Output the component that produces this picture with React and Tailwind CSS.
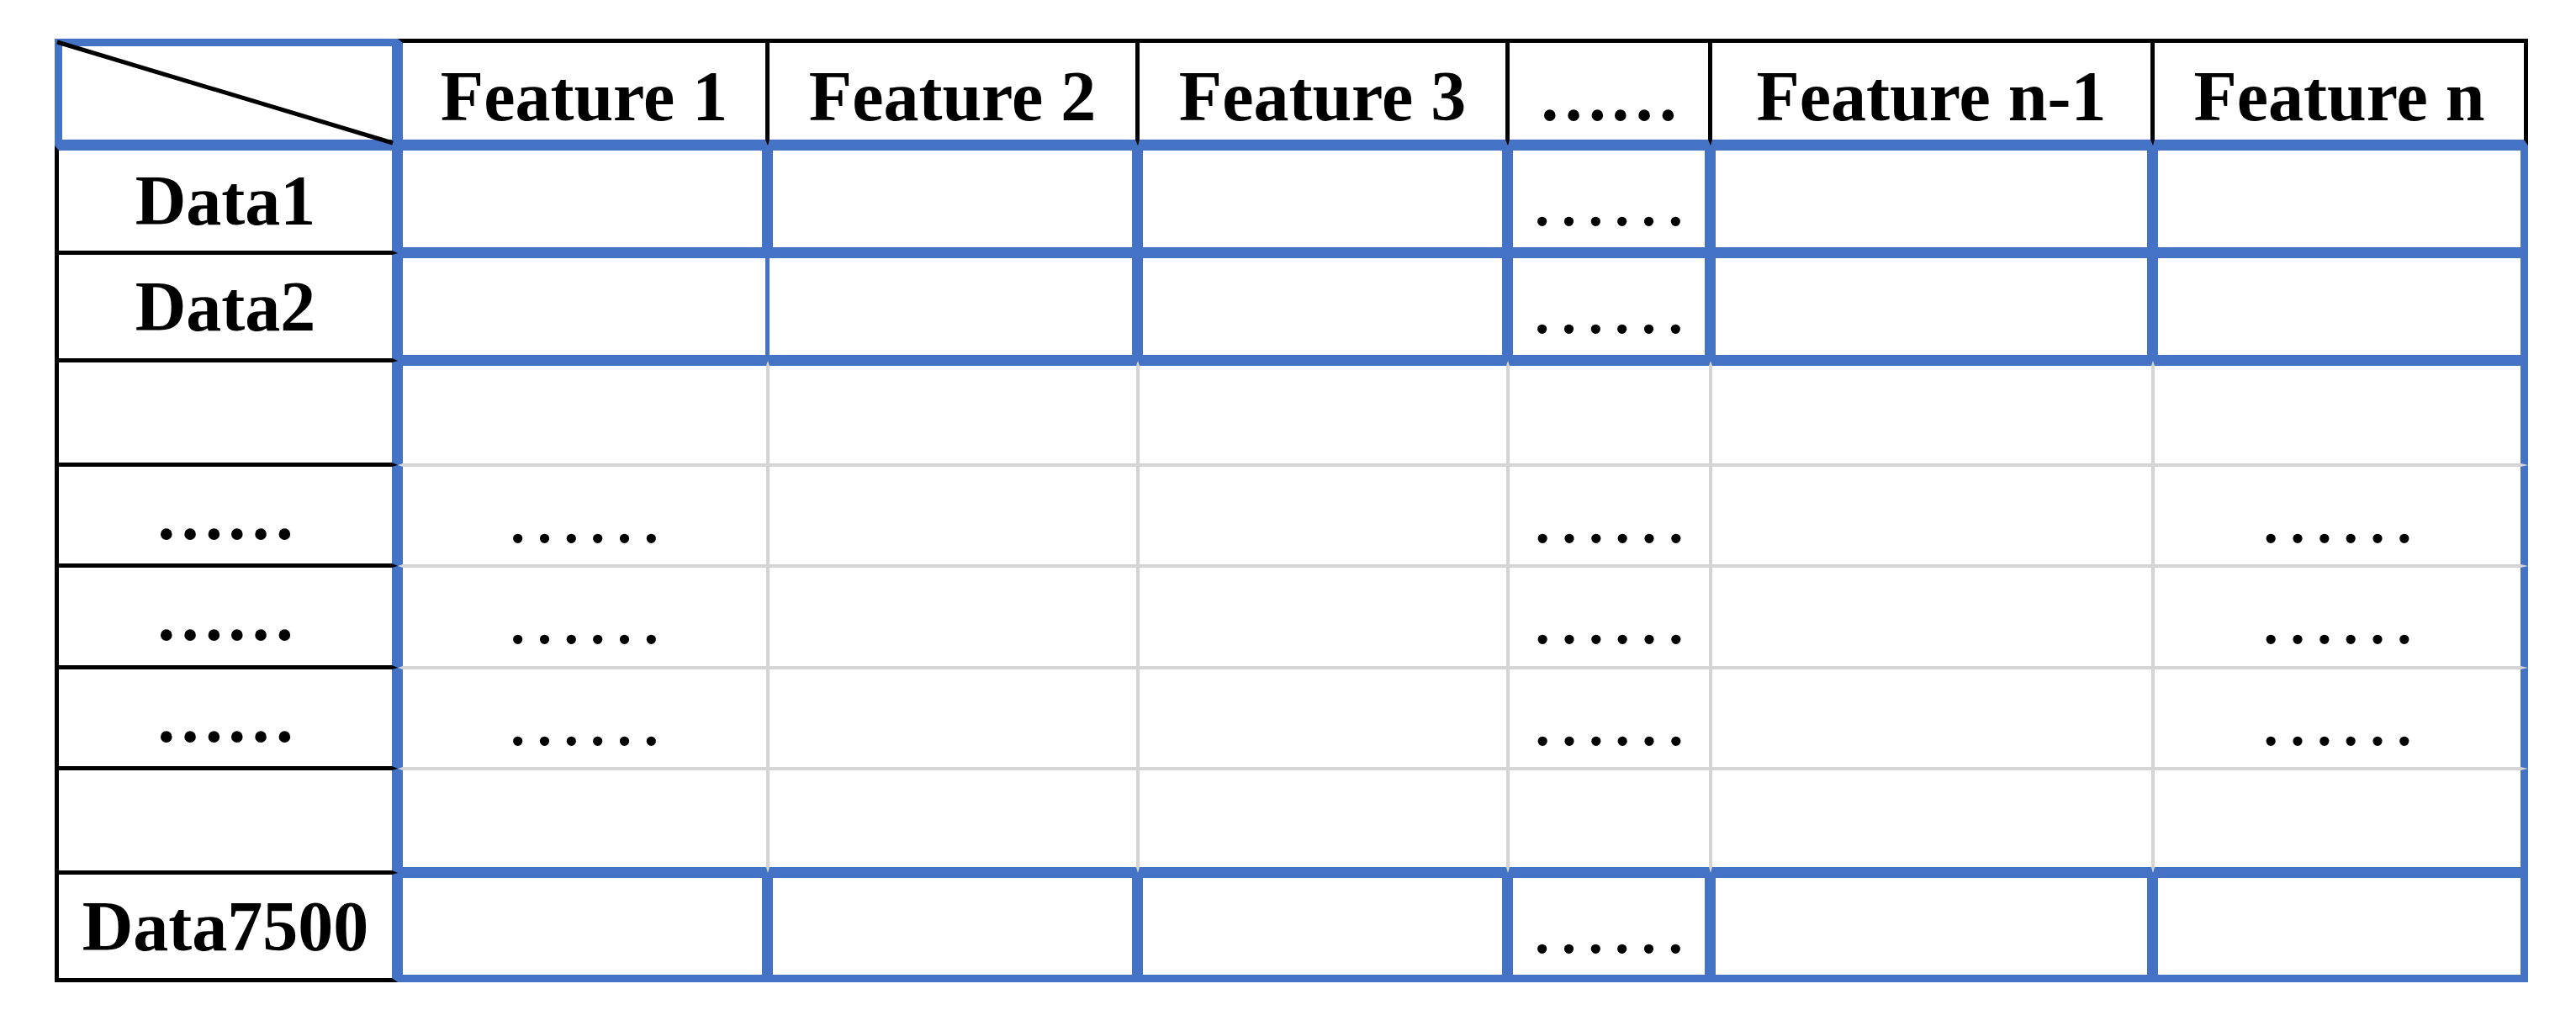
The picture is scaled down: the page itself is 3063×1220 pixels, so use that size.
import React from 'react';

// border halves: a line between two cells is split, left/top cell draws R/B, right/bottom cell draws L/T
const L = {
  outerBlue: 'border-l-[9px] border-l-[#4472c4]',
  outerBlack: 'border-l-[5px] border-l-black',
  thick: 'border-l-[6px] border-l-[#4472c4]',
  thinBlue: 'border-l-[2px] border-l-[#4472c4]',
  black: 'border-l-[2px] border-l-black',
  gray: 'border-l-[2px] border-l-[#d4d4d4]',
};
const R = {
  outerBlue: 'border-r-[9px] border-r-[#4472c4]',
  outerBlack: 'border-r-[5px] border-r-black',
  thick: 'border-r-[7px] border-r-[#4472c4]',
  thinBlue: 'border-r-[3px] border-r-[#4472c4]',
  black: 'border-r-[3px] border-r-black',
  gray: 'border-r-[2px] border-r-[#d4d4d4]',
};
const T = {
  outerBlue: 'border-t-[9px] border-t-[#4472c4]',
  outerBlack: 'border-t-[5px] border-t-black',
  thick: 'border-t-[6px] border-t-[#4472c4]',
  black: 'border-t-[2px] border-t-black',
  gray: 'border-t-[2px] border-t-[#d4d4d4]',
};
const B = {
  outerBlue: 'border-b-[9px] border-b-[#4472c4]',
  outerBlack: 'border-b-[5px] border-b-black',
  thick: 'border-b-[7px] border-b-[#4472c4]',
  black: 'border-b-[3px] border-b-black',
  gray: 'border-b-[2px] border-b-[#d4d4d4]',
};

const dataV = ['outerBlack', 'thick', 'thick', 'thick', 'thick', 'thick', 'thick', 'outerBlue'];
const midV = ['outerBlack', 'thick', 'gray', 'gray', 'gray', 'gray', 'gray', 'outerBlue'];

// vertical lines per row (8 boundaries)
const vLines = [
  ['outerBlue', 'thick', 'black', 'black', 'black', 'black', 'black', 'outerBlack'],
  dataV,
  ['outerBlack', 'thick', 'thinBlue', 'thick', 'thick', 'thick', 'thick', 'outerBlue'],
  midV, midV, midV, midV, midV,
  dataV,
];

const thickH = ['black', 'thick', 'thick', 'thick', 'thick', 'thick', 'thick'];
const grayH = ['black', 'gray', 'gray', 'gray', 'gray', 'gray', 'gray'];

// horizontal lines per boundary (10) by column
const hLines = [
  ['outerBlue', 'outerBlack', 'outerBlack', 'outerBlack', 'outerBlack', 'outerBlack', 'outerBlack'],
  ['thick', 'thick', 'thick', 'thick', 'thick', 'thick', 'thick'],
  thickH, thickH,
  grayH, grayH, grayH, grayH,
  thickH,
  ['outerBlack', 'outerBlue', 'outerBlue', 'outerBlue', 'outerBlue', 'outerBlue', 'outerBlue'],
];

const headers = ['Feature 1', 'Feature 2', 'Feature 3', '……', 'Feature n-1', 'Feature n'];
const labels = ['', 'Data1', 'Data2', '', '……', '……', '……', '', 'Data7500'];

const hasDots = (r, c) => {
  if ([1, 2, 8].includes(r)) return c === 4;
  if ([4, 5, 6].includes(r)) return c === 1 || c === 4 || c === 6;
  return false;
};

const Cell = ({ r, c }) => {
  const cls = [
    L[vLines[r][c]],
    R[vLines[r][c + 1]],
    T[hLines[r][c]],
    B[hLines[r + 1][c]],
  ].join(' ');

  if (r === 0 && c === 0) {
    return (
      <div className={`relative bg-white ${cls}`}>
        <svg
          className="absolute -left-[9px] -top-[9px] w-[408px] h-[127px] overflow-visible"
          viewBox="0 0 408 127"
        >
          <line x1="3" y1="4" x2="402" y2="124" stroke="black" strokeWidth="5" />
        </svg>
      </div>
    );
  }

  if (r === 0) {
    return (
      <div className={`flex items-center justify-center pt-[12px] font-bold text-[84px] leading-none ${cls}`}>
        {headers[c - 1]}
      </div>
    );
  }

  if (c === 0) {
    return (
      <div className={`flex items-center justify-center font-bold text-[84px] leading-none ${cls}`}>
        {labels[r]}
      </div>
    );
  }

  return (
    <div className={`flex items-center justify-center font-normal text-[95px] leading-none ${cls}`}>
      {hasDots(r, c) ? '……' : ''}
    </div>
  );
};

export default function App() {
  const rows = [0, 1, 2, 3, 4, 5, 6, 7, 8];
  const cols = [0, 1, 2, 3, 4, 5, 6];

  return (
    <div className="w-[3063px] h-[1220px] bg-white pl-[65px] pt-[46px] text-black font-['Liberation_Serif','Times_New_Roman',serif]">
      <div className="grid w-[2941px] grid-cols-[408px_440px_440px_440px_241px_526px_446px] grid-rows-[127px_128px_128px_124px_120px_121px_120px_124px_130px]">
        {rows.map((r) => cols.map((c) => <Cell key={`${r}-${c}`} r={r} c={c} />))}
      </div>
    </div>
  );
}
